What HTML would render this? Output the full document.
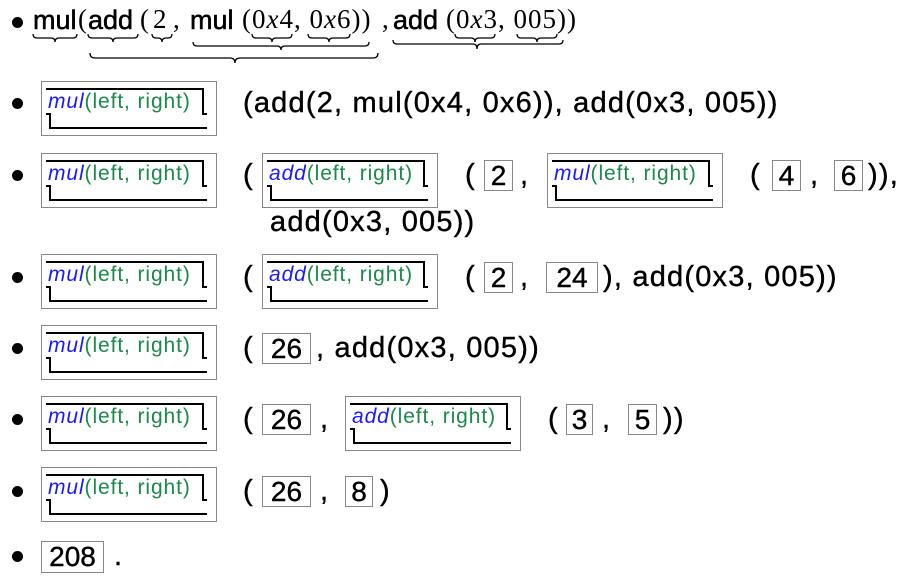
<!DOCTYPE html>
<html><head><meta charset="utf-8"><style>
*{margin:0;padding:0;box-sizing:border-box}
body{width:908px;height:587px;background:#fff;position:relative;overflow:hidden;font-family:"Liberation Sans",sans-serif;color:#000}
.a{position:absolute;white-space:nowrap;line-height:1}
.s{font-size:27px;-webkit-text-stroke:0.5px #000}
.m{font-family:"Liberation Serif",serif;font-size:27px}
.i{font-style:italic}
.b{position:absolute;width:11px;height:11px;border-radius:50%;background:#000;left:12px}
.t{font-size:29px;letter-spacing:1.2px;-webkit-text-stroke:0.4px #000}
.box{position:absolute;width:176px;height:55px;border:1px solid #888}
.box .l{position:absolute;background:#000}
.box .tx{position:absolute;left:6px;top:8px;font-size:21px;color:#1a8a4a;white-space:nowrap;letter-spacing:0.9px;line-height:24px}
.box .tx b{font-weight:normal;font-style:italic;color:#1a1aff}
.n{position:absolute;height:31px;border:1px solid #888;font-size:28px;line-height:29px;text-align:center;-webkit-text-stroke:0.4px #000}
</style></head><body>
<!-- Row 1 -->
<div class="b" style="top:17px"></div>
<div class="a s" style="left:33px;top:7px">mul</div>
<div class="a m" style="left:78px;top:6px">(</div>
<div class="a s" style="left:88px;top:7px">add</div>
<div class="a m" style="left:140px;top:6px">(</div>
<div class="a m" style="left:153px;top:6px">2</div>
<div class="a m" style="left:173px;top:6px">,</div>
<div class="a s" style="left:190px;top:7px">mul</div>
<div class="a m" style="left:242px;top:6px;letter-spacing:1px">(0<span class="i">x</span>4,&nbsp;0<span class="i">x</span>6))</div>
<div class="a m" style="left:382px;top:6px">,</div>
<div class="a s" style="left:393px;top:7px">add</div>
<div class="a m" style="left:446px;top:6px;letter-spacing:1px">(0<span class="i">x</span>3,&nbsp;005))</div>
<svg style="position:absolute;left:0;top:0" width="600" height="70" fill="none" stroke="#000" stroke-width="1.3">
<path d="M33,34 q0,4 4,4 h14 q4,0 4,4 q0,-4 4,-4 h14 q4,0 4,-4"/>
<path d="M88,34 q0,4 4,4 h17 q4,0 4,4 q0,-4 4,-4 h17 q4,0 4,-4"/>
<path d="M152,34 q0,4 4,4 h2 q4,0 4,4 q0,-4 4,-4 h2 q4,0 4,-4"/>
<path d="M252,34 q0,4 4,4 h12 q4,0 4,4 q0,-4 4,-4 h12 q4,0 4,-4"/>
<path d="M308,34 q0,4 4,4 h13 q4,0 4,4 q0,-4 4,-4 h13 q4,0 4,-4"/>
<path d="M455,34 q0,4 4,4 h12 q4,0 4,4 q0,-4 4,-4 h12 q4,0 4,-4"/>
<path d="M517,34 q0,4 4,4 h12 q4,0 4,4 q0,-4 4,-4 h12 q4,0 4,-4"/>
<path d="M193,42 q0,4 4,4 h80 q4,0 4,4 q0,-4 4,-4 h80 q4,0 4,-4"/>
<path d="M393,40 q0,4 4,4 h76 q4,0 4,5 q0,-5 4,-5 h78 q4,0 4,-4"/>
<path d="M90,53 q0,5 5,5 h135 q5,0 5,5 q0,-5 5,-5 h133 q5,0 5,-5"/>
</svg>

<!-- Row 2 -->
<div class="b" style="top:98px"></div>
<div class="box" style="left:41px;top:81px"><div class="l" style="left:4px;top:6px;width:158px;height:2px"></div><div class="l" style="left:160px;top:6px;width:2px;height:27px"></div><div class="l" style="left:160px;top:31px;width:5px;height:2px"></div><div class="l" style="left:4px;top:31px;width:5px;height:2px"></div><div class="l" style="left:7px;top:31px;width:2px;height:16px"></div><div class="l" style="left:7px;top:45px;width:158px;height:2px"></div><div class="tx"><b>mul</b>(left, right)</div></div>
<div class="a t" style="left:243px;top:89px">(add(2, mul(0x4, 0x6)), add(0x3, 005))</div>

<!-- Row 3 -->
<div class="b" style="top:170px"></div>
<div class="box" style="left:41px;top:153px"><div class="l" style="left:4px;top:6px;width:158px;height:2px"></div><div class="l" style="left:160px;top:6px;width:2px;height:27px"></div><div class="l" style="left:160px;top:31px;width:5px;height:2px"></div><div class="l" style="left:4px;top:31px;width:5px;height:2px"></div><div class="l" style="left:7px;top:31px;width:2px;height:16px"></div><div class="l" style="left:7px;top:45px;width:158px;height:2px"></div><div class="tx"><b>mul</b>(left, right)</div></div>
<div class="a t" style="left:243px;top:161px">(</div>
<div class="box" style="left:262px;top:153px"><div class="l" style="left:4px;top:6px;width:158px;height:2px"></div><div class="l" style="left:160px;top:6px;width:2px;height:27px"></div><div class="l" style="left:160px;top:31px;width:5px;height:2px"></div><div class="l" style="left:4px;top:31px;width:5px;height:2px"></div><div class="l" style="left:7px;top:31px;width:2px;height:16px"></div><div class="l" style="left:7px;top:45px;width:158px;height:2px"></div><div class="tx"><b>add</b>(left, right)</div></div>
<div class="a t" style="left:465px;top:161px">(</div>
<div class="n" style="left:484px;top:160px;width:29px">2</div>
<div class="a t" style="left:520px;top:161px">,</div>
<div class="box" style="left:547px;top:153px"><div class="l" style="left:4px;top:6px;width:158px;height:2px"></div><div class="l" style="left:160px;top:6px;width:2px;height:27px"></div><div class="l" style="left:160px;top:31px;width:5px;height:2px"></div><div class="l" style="left:4px;top:31px;width:5px;height:2px"></div><div class="l" style="left:7px;top:31px;width:2px;height:16px"></div><div class="l" style="left:7px;top:45px;width:158px;height:2px"></div><div class="tx"><b>mul</b>(left, right)</div></div>
<div class="a t" style="left:750px;top:161px">(</div>
<div class="n" style="left:772px;top:160px;width:29px">4</div>
<div class="a t" style="left:810px;top:161px">,</div>
<div class="n" style="left:834px;top:160px;width:29px">6</div>
<div class="a t" style="left:868px;top:161px">)),</div>
<div class="a t" style="left:270px;top:208px">add(0x3, 005))</div>

<!-- Row 4 -->
<div class="b" style="top:272px"></div>
<div class="box" style="left:41px;top:254px"><div class="l" style="left:4px;top:6px;width:158px;height:2px"></div><div class="l" style="left:160px;top:6px;width:2px;height:27px"></div><div class="l" style="left:160px;top:31px;width:5px;height:2px"></div><div class="l" style="left:4px;top:31px;width:5px;height:2px"></div><div class="l" style="left:7px;top:31px;width:2px;height:16px"></div><div class="l" style="left:7px;top:45px;width:158px;height:2px"></div><div class="tx"><b>mul</b>(left, right)</div></div>
<div class="a t" style="left:243px;top:263px">(</div>
<div class="box" style="left:262px;top:254px"><div class="l" style="left:4px;top:6px;width:158px;height:2px"></div><div class="l" style="left:160px;top:6px;width:2px;height:27px"></div><div class="l" style="left:160px;top:31px;width:5px;height:2px"></div><div class="l" style="left:4px;top:31px;width:5px;height:2px"></div><div class="l" style="left:7px;top:31px;width:2px;height:16px"></div><div class="l" style="left:7px;top:45px;width:158px;height:2px"></div><div class="tx"><b>add</b>(left, right)</div></div>
<div class="a t" style="left:465px;top:263px">(</div>
<div class="n" style="left:484px;top:262px;width:29px">2</div>
<div class="a t" style="left:520px;top:263px">,</div>
<div class="n" style="left:546px;top:262px;width:52px">24</div>
<div class="a t" style="left:603px;top:263px">), add(0x3, 005))</div>

<!-- Row 5 -->
<div class="b" style="top:343px"></div>
<div class="box" style="left:41px;top:325px"><div class="l" style="left:4px;top:6px;width:158px;height:2px"></div><div class="l" style="left:160px;top:6px;width:2px;height:27px"></div><div class="l" style="left:160px;top:31px;width:5px;height:2px"></div><div class="l" style="left:4px;top:31px;width:5px;height:2px"></div><div class="l" style="left:7px;top:31px;width:2px;height:16px"></div><div class="l" style="left:7px;top:45px;width:158px;height:2px"></div><div class="tx"><b>mul</b>(left, right)</div></div>
<div class="a t" style="left:243px;top:334px">(</div>
<div class="n" style="left:262px;top:333px;width:49px">26</div>
<div class="a t" style="left:316px;top:334px">, add(0x3, 005))</div>

<!-- Row 6 -->
<div class="b" style="top:414px"></div>
<div class="box" style="left:41px;top:396px"><div class="l" style="left:4px;top:6px;width:158px;height:2px"></div><div class="l" style="left:160px;top:6px;width:2px;height:27px"></div><div class="l" style="left:160px;top:31px;width:5px;height:2px"></div><div class="l" style="left:4px;top:31px;width:5px;height:2px"></div><div class="l" style="left:7px;top:31px;width:2px;height:16px"></div><div class="l" style="left:7px;top:45px;width:158px;height:2px"></div><div class="tx"><b>mul</b>(left, right)</div></div>
<div class="a t" style="left:243px;top:405px">(</div>
<div class="n" style="left:262px;top:404px;width:49px">26</div>
<div class="a t" style="left:320px;top:405px">,</div>
<div class="box" style="left:345px;top:396px"><div class="l" style="left:4px;top:6px;width:158px;height:2px"></div><div class="l" style="left:160px;top:6px;width:2px;height:27px"></div><div class="l" style="left:160px;top:31px;width:5px;height:2px"></div><div class="l" style="left:4px;top:31px;width:5px;height:2px"></div><div class="l" style="left:7px;top:31px;width:2px;height:16px"></div><div class="l" style="left:7px;top:45px;width:158px;height:2px"></div><div class="tx"><b>add</b>(left, right)</div></div>
<div class="a t" style="left:548px;top:405px">(</div>
<div class="n" style="left:566px;top:404px;width:27px">3</div>
<div class="a t" style="left:602px;top:405px">,</div>
<div class="n" style="left:628px;top:404px;width:29px">5</div>
<div class="a t" style="left:663px;top:405px">))</div>

<!-- Row 7 -->
<div class="b" style="top:486px"></div>
<div class="box" style="left:41px;top:467px"><div class="l" style="left:4px;top:6px;width:158px;height:2px"></div><div class="l" style="left:160px;top:6px;width:2px;height:27px"></div><div class="l" style="left:160px;top:31px;width:5px;height:2px"></div><div class="l" style="left:4px;top:31px;width:5px;height:2px"></div><div class="l" style="left:7px;top:31px;width:2px;height:16px"></div><div class="l" style="left:7px;top:45px;width:158px;height:2px"></div><div class="tx"><b>mul</b>(left, right)</div></div>
<div class="a t" style="left:243px;top:477px">(</div>
<div class="n" style="left:262px;top:476px;width:49px">26</div>
<div class="a t" style="left:320px;top:477px">,</div>
<div class="n" style="left:345px;top:476px;width:28px">8</div>
<div class="a t" style="left:380px;top:477px">)</div>

<!-- Row 8 -->
<div class="b" style="top:551px"></div>
<div class="n" style="left:41px;top:541px;width:63px;height:32px">208</div>
<div class="a t" style="left:114px;top:542px">.</div>
</body></html>
